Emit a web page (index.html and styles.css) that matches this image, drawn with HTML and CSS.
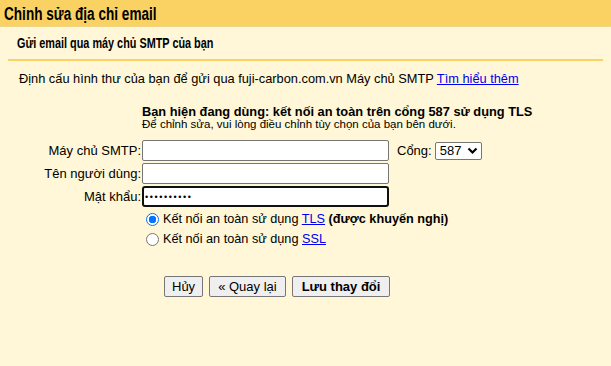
FILE: index.html
```html
<!DOCTYPE html>
<html lang="vi">
<head>
<meta charset="utf-8">
<link rel="stylesheet" href="styles.css">
</head>
<body>
<div class="header"><span class="narrow title-text">Chỉnh sửa địa chỉ email</span></div>
<div class="content">
  <div class="subtitle"><span class="narrow sub-text">Gửi email qua máy chủ SMTP của bạn</span></div>
  <div class="rule"></div>
  <p class="intro">Định cấu hình thư của bạn để gửi qua fuji-carbon.com.vn Máy chủ SMTP <a href="#">Tìm hiểu thêm</a></p>
  <div class="form">
    <div></div>
    <div class="status">
      <div class="status-main">Bạn hiện đang dùng: kết nối an toàn trên cổng 587 sử dụng TLS</div>
      <div class="status-sub">Để chỉnh sửa, vui lòng điều chỉnh tùy chọn của bạn bên dưới.</div>
    </div>
    <label class="lbl">Máy chủ SMTP:</label>
    <div class="field-row">
      <input class="txt" type="text">
      <span class="port-lbl">Cổng:</span>
      <span class="select">587<svg width="11" height="8" viewBox="0 0 11 8"><path d="M1.5 1.5 L5.5 5.5 L9.5 1.5" fill="none" stroke="#000" stroke-width="2.2"/></svg></span>
    </div>
    <label class="lbl">Tên người dùng:</label>
    <div class="field-row"><input class="txt" type="text"></div>
    <label class="lbl">Mật khẩu:</label>
    <div class="field-row"><span class="txt pw">••••••••••</span></div>
    <div></div>
    <div class="radios">
      <div class="radio-row"><span class="radio on"></span><span>Kết nối an toàn sử dụng <a href="#">TLS</a> <b>(được khuyến nghị)</b></span></div>
      <div class="radio-row"><span class="radio"></span><span>Kết nối an toàn sử dụng <a href="#">SSL</a></span></div>
    </div>
  </div>
  <div class="buttons">
    <button class="btn">Hủy</button>
    <button class="btn wide">« Quay lại</button>
    <button class="btn bold">Lưu thay đổi</button>
  </div>
</div>
</body>
</html>
```
FILE: styles.css
```css
html, body {
  margin: 0;
  padding: 0;
  background: #fff7d7;
  font-family: "Liberation Sans", Arial, sans-serif;
  color: #000;
  height: 100%;
}
.narrow {
  display: inline-block;
  transform-origin: left center;
  white-space: nowrap;
}
.header {
  background: #fad163;
  font-weight: bold;
  font-size: 18px;
  height: 27px;
  line-height: 28px;
  padding-left: 4px;
  border-bottom: 1px dotted #f3d98a;
  box-sizing: border-box;
}
.title-text {
  transform: scaleX(0.755);
}
.content {
  padding: 0 8px;
}
.subtitle {
  font-weight: bold;
  font-size: 14px;
  padding: 8px 0 0 9px;
  height: 24px;
}
.sub-text {
  transform: scaleX(0.775);
}
.rule {
  height: 2px;
  background: #fad163;
}
.intro {
  margin: 0;
  padding: 10px 0 0 11px;
  font-size: 12.8px;
  height: 25px;
}
.intro a, .radio-row a {
  color: #0000ee;
}
.form {
  display: grid;
  grid-template-columns: 134px auto;
  row-gap: 2px;
  align-items: center;
  margin-top: 8px;
}
.status {
  padding-bottom: 8px;
}
.status-main {
  font-weight: bold;
  font-size: 12.8px;
  line-height: 16px;
}
.status-sub {
  font-size: 11.5px;
  line-height: 11px;
  margin-top: -1px;
}
.lbl {
  text-align: right;
  font-size: 13px;
  padding-right: 1px;
  color: #000;
}
.field-row {
  display: flex;
  align-items: center;
}
.txt {
  width: 247px;
  height: 21px;
  box-sizing: border-box;
  border: 1px solid #767676;
  border-radius: 2px;
  background: #fff;
  margin: 0;
  padding: 0 2px;
  font-size: 13px;
}
.pw {
  border: 2px solid #101010;
  border-radius: 3px;
  display: flex;
  align-items: center;
  font-size: 9px;
  letter-spacing: 1.6px;
  padding-left: 1px;
}
.port-lbl {
  font-size: 13px;
  margin-left: 8px;
  margin-right: 3px;
}
.select {
  display: inline-flex;
  align-items: center;
  gap: 6px;
  width: 47px;
  height: 18px;
  box-sizing: border-box;
  border: 1px solid #767676;
  border-radius: 2px;
  background: #fff;
  font-size: 13px;
  padding-left: 4px;
}
.radios {
  padding-left: 4px;
}
.radio-row {
  display: flex;
  align-items: center;
  font-size: 12.7px;
  height: 20px;
}
.radio {
  width: 13px;
  height: 13px;
  box-sizing: border-box;
  border: 1px solid #767676;
  border-radius: 50%;
  background: #fff;
  margin-right: 4px;
}
.radio.on {
  border: 1.5px solid #0075ff;
  background: radial-gradient(circle, #0075ff 0 3.5px, #fff 4px);
}
.buttons {
  display: flex;
  gap: 6px;
  padding-left: 156px;
  padding-top: 27px;
}
.btn {
  font-family: "Liberation Sans", Arial, sans-serif;
  font-size: 13px;
  height: 21px;
  padding: 0 7px;
  border: 1px solid #767676;
  border-radius: 2px;
  background: #efefef;
  color: #000;
}
.btn.wide {
  padding: 0 8px;
}
.btn.bold {
  font-weight: bold;
  padding: 0 9px;
}
```
